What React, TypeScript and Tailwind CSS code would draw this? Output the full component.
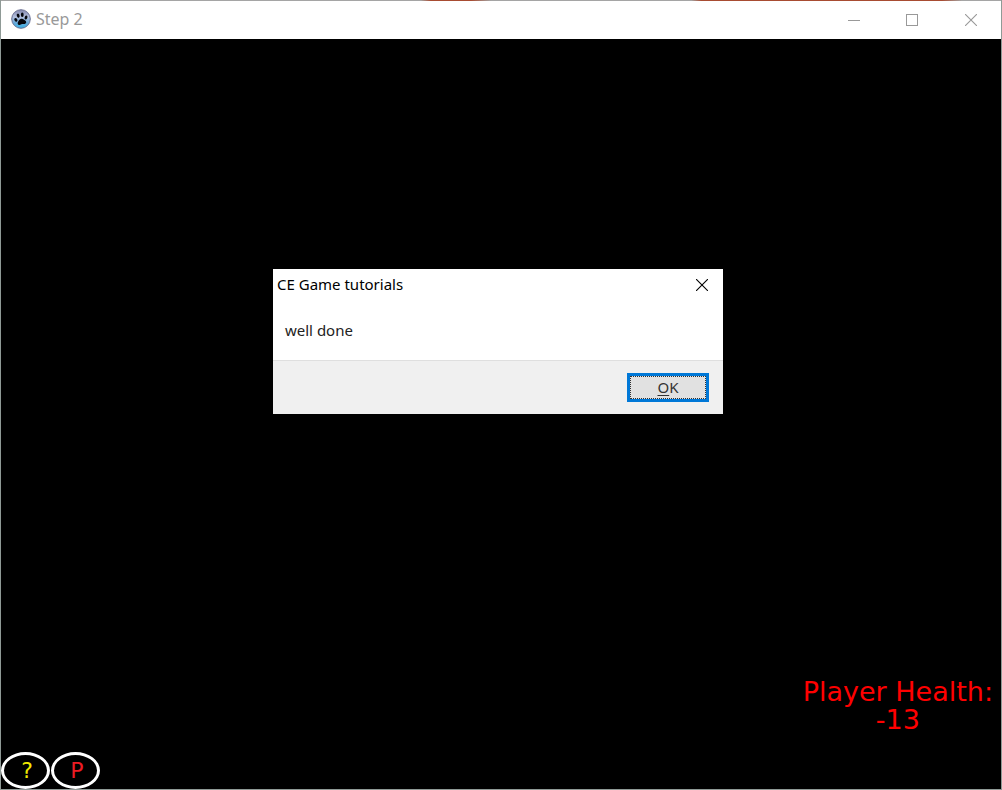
import { useState } from 'react';

function PawIcon() {
  return (
    <svg viewBox="0 0 20 20" className="h-5 w-5" aria-hidden="true">
      <defs>
        <linearGradient id="orb" x1="0" y1="0" x2="0" y2="1">
          <stop offset="0" stopColor="#8387ad" />
          <stop offset="0.4" stopColor="#b3bfde" />
          <stop offset="0.7" stopColor="#69a8d8" />
          <stop offset="1" stopColor="#35b5e8" />
        </linearGradient>
      </defs>
      <circle cx="10" cy="10" r="9.3" fill="url(#orb)" stroke="#6a6f92" strokeWidth="1" />
      <g fill="#05070d" transform="rotate(-10 10 10)">
        <ellipse cx="4.8" cy="10" rx="1.4" ry="1.9" transform="rotate(-25 4.8 10)" />
        <ellipse cx="7.8" cy="6.2" rx="1.4" ry="2.1" transform="rotate(-8 7.8 6.2)" />
        <ellipse cx="12" cy="6" rx="1.4" ry="2.2" transform="rotate(10 12 6)" />
        <ellipse cx="15.2" cy="9.4" rx="1.4" ry="2" transform="rotate(25 15.2 9.4)" />
        <path d="M10.300 9.800c2 0 2.500 1.400 3.600 2.400 1.200 1.100.8 3.200-1 3.300-1 0-1.700-.5-2.700-.4-1 0-1.800.8-2.900.5-1.700-.4-1.700-2.400-.6-3.500 1-1 1.600-2.300 3.600-2.300z" />
      </g>
    </svg>
  );
}

function CrossIcon() {
  return (
    <svg viewBox="0 0 12 12" className="h-3 w-3" aria-hidden="true">
      <path d="M0 0L12 12M12 0L0 12" stroke="currentColor" strokeWidth="1.1" />
    </svg>
  );
}

function TitleBar() {
  return (
    <header className="flex h-[38px] items-center justify-between bg-white text-[#999999]">
      <div className="flex items-center gap-[5px] pb-[2px] pl-[10px]">
        <PawIcon />
        <h1 className="text-base leading-5">Step 2</h1>
      </div>
      <div className="flex h-full">
        <button type="button" aria-label="Minimize" className="flex w-[58px] items-center justify-center">
          <span className="h-px w-3 bg-current" />
        </button>
        <button type="button" aria-label="Maximize" className="flex w-[58px] items-center justify-center">
          <span className="h-3 w-3 border border-current" />
        </button>
        <button type="button" aria-label="Close" className="flex w-[60px] items-center justify-center">
          <CrossIcon />
        </button>
      </div>
    </header>
  );
}

function MessageDialog({ onClose }: { onClose: () => void }) {
  return (
    <div
      role="dialog"
      aria-labelledby="dialog-title"
      className="absolute top-[230px] left-[272px] w-[450px] bg-white text-black"
    >
      <div className="flex h-8 justify-between pl-1">
        <h2 id="dialog-title" className="pt-[5px] text-[15px] leading-5">CE Game tutorials</h2>
        <button type="button" aria-label="Close message" onClick={onClose} className="flex h-8 w-[42px] items-center justify-center">
          <CrossIcon />
        </button>
      </div>
      <p className="px-3 pt-[19px] pb-5 text-[15px] leading-5 text-[#222222]">well done</p>
      <div className="flex justify-end border-t border-[#dfdfdf] bg-[#f0f0f0] px-[14px] py-3">
        <button type="button" onClick={onClose} className="h-[29px] w-[82px] border-3 border-[#0078d7] bg-[#e1e1e1]">
          <span className="flex h-full items-center justify-center border border-dotted border-[#333333] pb-[2px] text-[15px] leading-5 text-[#333333]">
            <span className="underline underline-offset-2">O</span>K
          </span>
        </button>
      </div>
    </div>
  );
}

function RoundButton({ label, name, color }: { label: string; name: string; color: string }) {
  return (
    <button
      type="button"
      aria-label={name}
      className={`flex h-[37px] w-[49px] items-center justify-center rounded-[50%] border-3 border-white pl-[3px] font-['DejaVu_Sans',sans-serif] text-[22px] leading-6 ${color}`}
    >
      {label}
    </button>
  );
}

export default function App() {
  const [open, setOpen] = useState(true);
  return (
    <div className="min-h-screen bg-[linear-gradient(90deg,#a5a5a5_42%,#a84c32_43%,#a84c32_47%,#a5a5a5_49%,#a5a5a5_69%,#a84c32_70%,#a84c32_94%,#a5a5a5_96%)] font-['Noto_Sans',sans-serif]">
      <div className="flex min-h-screen flex-col border-r border-b border-l border-[#8f9a96] pt-px">
        <TitleBar />
        <main className="relative flex grow flex-col justify-end bg-black">
          <p className="self-end pr-[8px] pb-[18px] text-center font-['DejaVu_Sans',sans-serif] text-[27px] leading-7 text-[#ff0000]">
            Player Health:
            <br />
            -13
          </p>
          <div className="flex gap-px">
            <RoundButton label="?" name="Help" color="text-[#f0e800]" />
            <RoundButton label="P" name="Pause" color="text-[#ed1c24]" />
          </div>
          {open && <MessageDialog onClose={() => setOpen(false)} />}
        </main>
      </div>
    </div>
  );
}
